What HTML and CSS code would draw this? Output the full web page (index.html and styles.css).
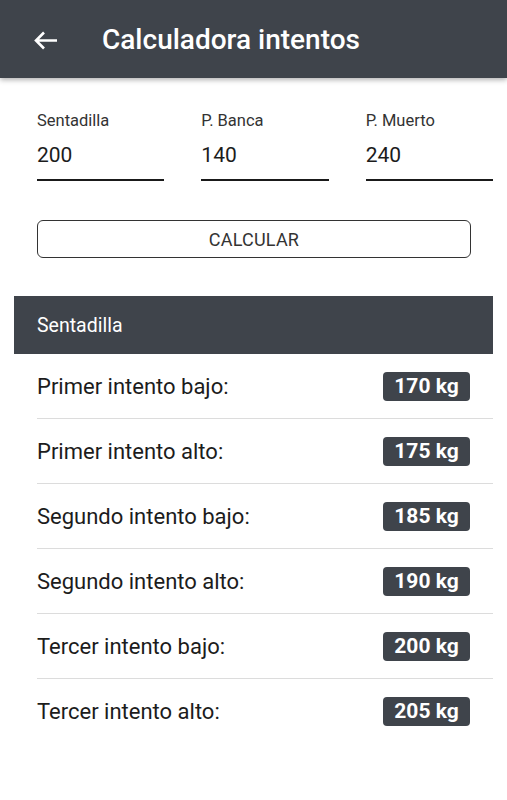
FILE: index.html
```html
<!DOCTYPE html>
<html lang="es">
<head>
    <meta charset="UTF-8">
    <meta name="viewport" content="width=device-width, initial-scale=1.0">
    <title>Calculadora intentos</title>
    <link rel="stylesheet" href="styles.css">
</head>
<body>
    <header class="toolbar">
        <button class="back-btn" aria-label="Volver">
            <svg width="25" height="19" viewBox="0 0 25 19">
                <path d="M24 9.5H3 M11 1.5 L3 9.5 L11 17.5" fill="none" stroke="#fff" stroke-width="2.6"/>
            </svg>
        </button>
        <h1>Calculadora intentos</h1>
    </header>

    <main class="content">
        <div class="inputs">
            <div class="field">
                <label for="squat">Sentadilla</label>
                <input type="text" id="squat" value="200">
            </div>
            <div class="field">
                <label for="bench">P. Banca</label>
                <input type="text" id="bench" value="140">
            </div>
            <div class="field">
                <label for="deadlift">P. Muerto</label>
                <input type="text" id="deadlift" value="240">
            </div>
        </div>

        <button class="calc-btn">CALCULAR</button>

        <section class="results">
            <div class="results-header">Sentadilla</div>
            <ul class="attempts">
                <li><span>Primer intento bajo:</span><span class="badge">170 kg</span></li>
                <li><span>Primer intento alto:</span><span class="badge">175 kg</span></li>
                <li><span>Segundo intento bajo:</span><span class="badge">185 kg</span></li>
                <li><span>Segundo intento alto:</span><span class="badge">190 kg</span></li>
                <li><span>Tercer intento bajo:</span><span class="badge">200 kg</span></li>
                <li><span>Tercer intento alto:</span><span class="badge">205 kg</span></li>
            </ul>
        </section>
    </main>
</body>
</html>
```

FILE: styles.css
```css
:root {
    --dark: #3f444b;
    --text: #1c1c1c;
    --divider: #dcdcdc;
}

body {
    margin: 0;
    background: #fff;
    font-family: Roboto, 'Noto Sans', sans-serif;
    color: var(--text);
}

.toolbar {
    display: flex;
    align-items: center;
    height: 78px;
    padding: 0 0 0 33px;
    background: var(--dark);
    box-shadow: 0 2px 5px rgba(0, 0, 0, 0.3);
    position: relative;
    z-index: 2;
}

.back-btn {
    display: flex;
    align-items: center;
    justify-content: center;
    width: 25px;
    height: 19px;
    padding: 0;
    margin: 2px 44px 0 0;
    border: none;
    background: none;
}

.toolbar h1 {
    margin: 0;
    font-size: 28px;
    font-weight: 500;
    color: #fff;
}

.content {
    padding: 33px 14px 0 14px;
}

.inputs {
    display: flex;
    gap: 37px;
    padding-left: 23px;
}

.field {
    display: flex;
    flex-direction: column;
    flex: 1;
}

.field label {
    font-size: 16.5px;
    color: #333;
    line-height: 20px;
}

.field input {
    border: none;
    border-bottom: 2px solid #1a1a1a;
    padding: 12px 0 12px 0;
    margin: 0;
    font-family: inherit;
    font-size: 21px;
    line-height: 24px;
    color: var(--text);
    background: none;
    outline: none;
    width: 100%;
}

.calc-btn {
    display: block;
    width: 434px;
    height: 38px;
    margin: 39px 0 0 23px;
    border: 1px solid #333;
    border-radius: 6px;
    background: #fff;
    font-family: inherit;
    font-size: 18px;
    font-weight: 400;
    color: #333;
    letter-spacing: 0.2px;
}

.results {
    margin-top: 38px;
}

.results-header {
    height: 58px;
    display: flex;
    align-items: center;
    padding-left: 23px;
    background: var(--dark);
    color: #fff;
    font-size: 19.5px;
}

.attempts {
    list-style: none;
    margin: 0;
    padding: 0 0 0 23px;
}

.attempts li {
    display: flex;
    align-items: center;
    justify-content: space-between;
    height: 64px;
    padding-right: 23px;
    border-bottom: 1px solid var(--divider);
    font-size: 22px;
}

.attempts li:last-child {
    border-bottom: none;
}

.badge {
    display: inline-flex;
    align-items: center;
    justify-content: center;
    width: 87px;
    height: 29px;
    border-radius: 4px;
    background: var(--dark);
    color: #fff;
    font-size: 21px;
    font-weight: 700;
}
```
